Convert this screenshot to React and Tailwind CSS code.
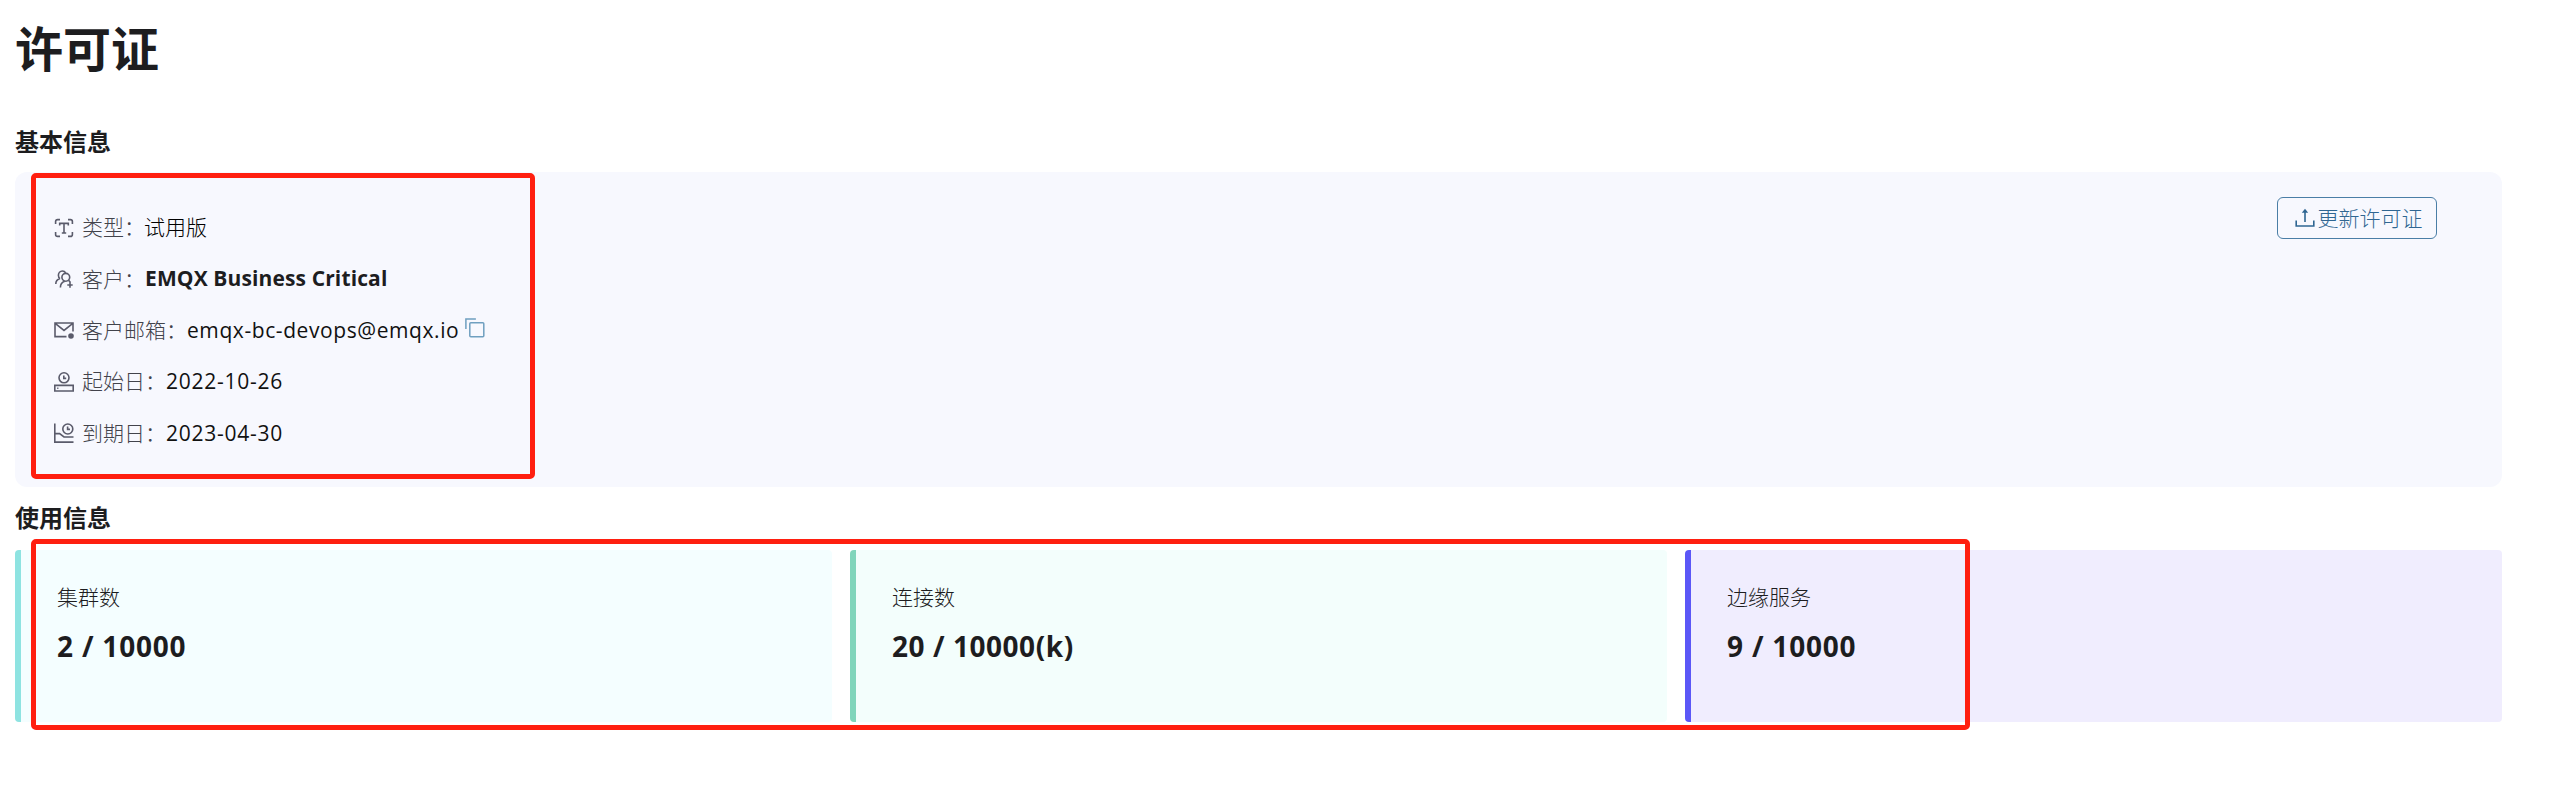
const cjk = "font-['Open_Sans','Noto_Sans_CJK_SC',sans-serif]";

function IconBase({ children, className = "" }) {
  return (
    <svg viewBox="0 0 20 20" fill="none" stroke="currentColor" strokeWidth="1.6" className={"size-5 shrink-0 " + className}>
      {children}
    </svg>
  );
}

function TypeIcon() {
  return (
    <IconBase>
      <path d="M1.6 6V3.600Q1.600 1.600 3.600 1.600H6M14 1.600h2.400Q18.400 1.600 18.400 3.600V6M18.400 14v2.400Q18.400 18.400 16.400 18.400H14M6 18.400H3.600Q1.600 18.400 1.600 16.400V14" />
      <path d="M5.700 7.400V5.400h8.600v2M10 5.400v9.400M7.800 15h4.400" />
    </IconBase>
  );
}

function CustomerIcon() {
  return (
    <IconBase>
      <circle cx="11.800" cy="8.300" r="3.900" />
      <path d="M6.400 18.600c0-3.300 1.800-5.700 4.400-6.400M14.600 11.200l1.800 2.200M6 9.700C4.900 9 4.400 7.800 4.400 6.300c0-2.400 1.700-4.300 4-4.300 1.400 0 2.600.7 3.300 1.900M1.800 15c0-2.700 1.700-4.700 4.200-5.500M16 13.300v5.400M13.300 16h5.400" />
    </IconBase>
  );
}

function MailIcon() {
  return (
    <IconBase>
      <path d="M19 11.500V3H1v13.600h11.500M1.500 3.600 10 10.400l8.500-6.800" />
      <circle cx="17" cy="16" r="2.800" fill="currentColor" stroke="none" />
    </IconBase>
  );
}

function StartIcon() {
  return (
    <IconBase>
      <circle cx="10" cy="5.800" r="5" />
      <path d="M9.800 3.400v3h2.400M.8 13.400h18.400v5.600H.8zM3.200 16.200h1.200" />
    </IconBase>
  );
}

function EndIcon() {
  return (
    <IconBase>
      <circle cx="13.800" cy="6" r="5" />
      <path d="M13.600 3.400v3H16M.8.500v18.600h18.700M1 10.600h4.600l4.400 3.400h9.500" />
    </IconBase>
  );
}

function CopyIcon() {
  return (
    <svg viewBox="0 0 20 20" fill="none" stroke="currentColor" strokeWidth="1.500" className="size-5 shrink-0">
      <path d="M.9 10.900V.9h10" />
      <rect x="4.800" y="4.800" width="14" height="14" rx="1" />
    </svg>
  );
}

function UploadIcon() {
  return (
    <svg viewBox="0 0 20 20" fill="none" stroke="currentColor" strokeWidth="1.600" className="size-5 shrink-0">
      <path d="M1.200 12.500v5.500h17.600v-5.500M10 14V2.500" />
      <path d="M10 .8 6.800 4.800h6.400z" fill="currentColor" stroke="none" />
    </svg>
  );
}

function InfoRow({ icon, label, children }) {
  return (
    <div className="flex h-[51.4px] items-center text-[21px] leading-none">
      <span className="text-[#5a5b6b]">{icon}</span>
      <span className="ml-2 font-light text-[#42434b]">{label}：</span>
      {children}
    </div>
  );
}

function StatCard({ label, value, className, tracking = "tracking-[0.8px]" }) {
  return (
    <div className={"h-[172px] flex-1 rounded-[4px] border-l-[6px] pl-9 pt-[31px] " + className}>
      <div className="text-[21px] font-light leading-8 text-[#1d1d1f]">{label}</div>
      <div className={"mt-[15px] text-[28px] font-bold leading-9 text-[#1d1d1f] " + tracking}>{value}</div>
    </div>
  );
}

export default function App() {
  return (
    <main className={"relative h-[804px] w-[2572px] overflow-hidden bg-white pl-[15px] pr-[70px] text-[#1d1d1f] " + cjk}>
      <h1 className="pt-[14px] text-[48px] font-bold leading-[70px]">许可证</h1>
      <h2 className="mt-10 text-[24px] font-bold leading-9">基本信息</h2>
      <section className="mt-3 flex h-[315px] items-start justify-between rounded-xl bg-[#f7f8fe] pl-[39px] pr-[65px]">
        <div className="pt-[30px]">
          <InfoRow icon={<TypeIcon />} label="类型">
            <span className="-ml-px font-light text-black">试用版</span>
          </InfoRow>
          <InfoRow icon={<CustomerIcon />} label="客户">
            <span className="-mt-0.5 font-bold tracking-[0.12px]">EMQX Business Critical</span>
          </InfoRow>
          <InfoRow icon={<MailIcon />} label="客户邮箱">
            <span className="tracking-[0.58px] text-[#111]">emqx-bc-devops@emqx.io</span>
            <button className="mb-[5px] ml-1.5 text-[#6f9fc0]" aria-label="复制"><CopyIcon /></button>
          </InfoRow>
          <InfoRow icon={<StartIcon />} label="起始日">
            <span className="tracking-[0.75px] text-[#111]">2022-10-26</span>
          </InfoRow>
          <InfoRow icon={<EndIcon />} label="到期日">
            <span className="tracking-[0.75px] text-[#111]">2023-04-30</span>
          </InfoRow>
        </div>
        <button className="mt-[25px] flex h-[42px] w-40 items-center justify-center gap-[3px] rounded-md border border-[#4a7ea6] pl-[3px] text-[21px] font-light leading-none text-[#2f6692]">
          <UploadIcon />
          更新许可证
        </button>
      </section>
      <h2 className="mt-[13px] text-[24px] font-bold leading-9">使用信息</h2>
      <section className="mt-[14px] flex gap-[18px]">
        <StatCard label="集群数" value="2 / 10000" className="border-[#8ee3e1] bg-[#f4feff]" />
        <StatCard label="连接数" value="20 / 10000(k)" className="border-[#80d5bb] bg-[#f3fefc]" tracking="tracking-[0.55px]" />
        <StatCard label="边缘服务" value="9 / 10000" className="border-[#5b57f7] bg-[#f0edfe]" />
      </section>
      <div className="pointer-events-none absolute left-[31px] top-[173px] h-[306px] w-[504px] rounded-[5px] border-[5px] border-[#ff1f10]" />
      <div className="pointer-events-none absolute left-[31px] top-[539px] h-[191px] w-[1939px] rounded-[5px] border-[5px] border-[#ff1f10]" />
    </main>
  );
}
